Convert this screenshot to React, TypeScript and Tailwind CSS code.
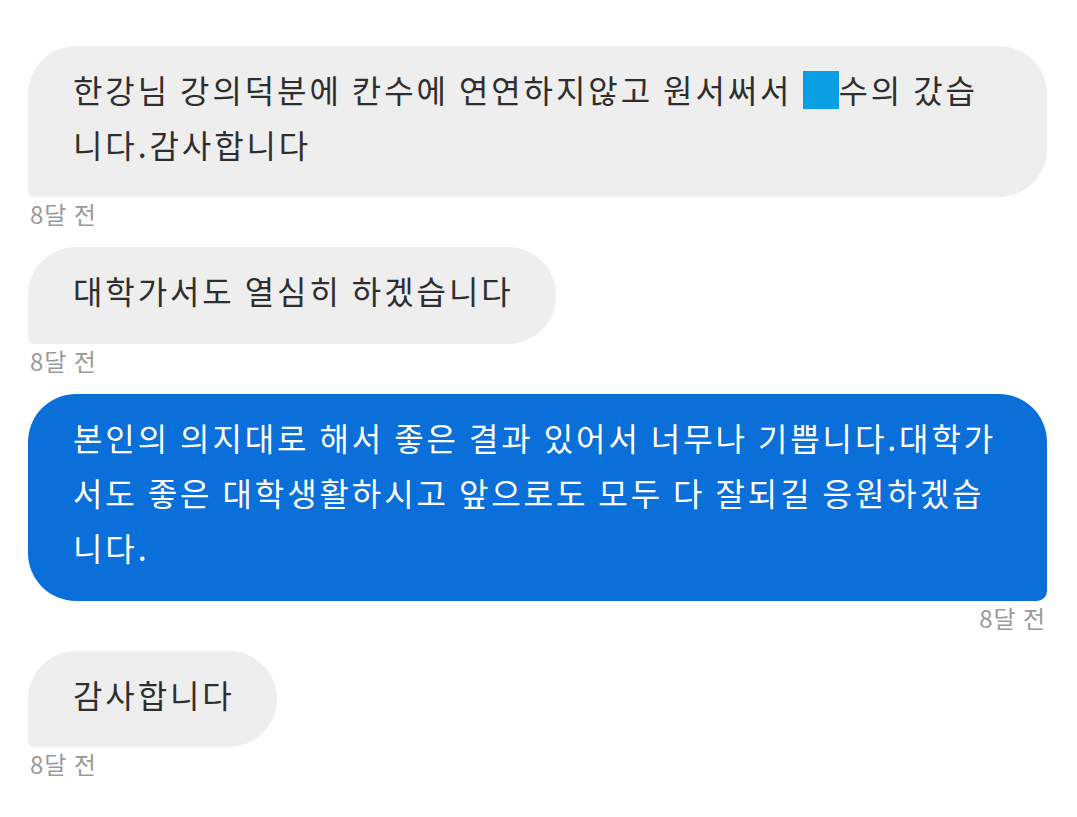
import React from 'react';

const font = { fontFamily: '"Noto Sans CJK KR", "Noto Sans", sans-serif' };

const Time: React.FC<{ right?: boolean }> = ({ right }) => (
  <div
    className={`mt-[2px] mb-[18px] text-[24px] leading-[30px] tracking-[1px] text-[#9a9a9a] ${right ? 'text-right pr-[1px]' : 'pl-[2px]'}`}
  >
    8달 전
  </div>
);

const App: React.FC = () => {
  return (
    <div className="min-h-screen w-full bg-white pt-[46px] pl-[28px] pr-[30px]" style={font}>
      <div className="w-full rounded-[48px] rounded-bl-[6px] bg-[#eeeeee] px-[45px] pt-[16px] pb-[25px] text-[32px] leading-[55px] tracking-[2.9px] text-[#2e2e2e]">
        한강님 강의덕분에 칸수에 연연하지않고 원서써서{' '}
        <span className="inline-block h-[38px] w-[36px] bg-[#0a9fe4] align-[-6px]" />
        수의 갔습
        <br />
        니다.감사합니다
      </div>
      <Time />

      <div className="w-fit rounded-[48px] rounded-bl-[6px] bg-[#eeeeee] pl-[45px] pr-[42px] pt-[16px] pb-[26px] text-[32px] leading-[55px] tracking-[2.9px] text-[#2e2e2e]">
        대학가서도 열심히 하겠습니다
      </div>
      <Time />

      <div className="w-full rounded-[48px] rounded-br-[10px] bg-[#0a6fd8] px-[45px] pt-[16px] pb-[26px] text-[32px] leading-[55px] tracking-[2.9px] text-white">
        본인의 의지대로 해서 좋은 결과 있어서 너무나 기쁩니다.대학가
        <br />
        서도 좋은 대학생활하시고 앞으로도 모두 다 잘되길 응원하겠습
        <br />
        니다.
      </div>
      <Time right />

      <div className="w-fit rounded-[48px] rounded-bl-[6px] bg-[#eeeeee] pl-[45px] pr-[42px] pt-[16px] pb-[25px] text-[32px] leading-[55px] tracking-[2.9px] text-[#2e2e2e]">
        감사합니다
      </div>
      <Time />
    </div>
  );
};

export default App;
